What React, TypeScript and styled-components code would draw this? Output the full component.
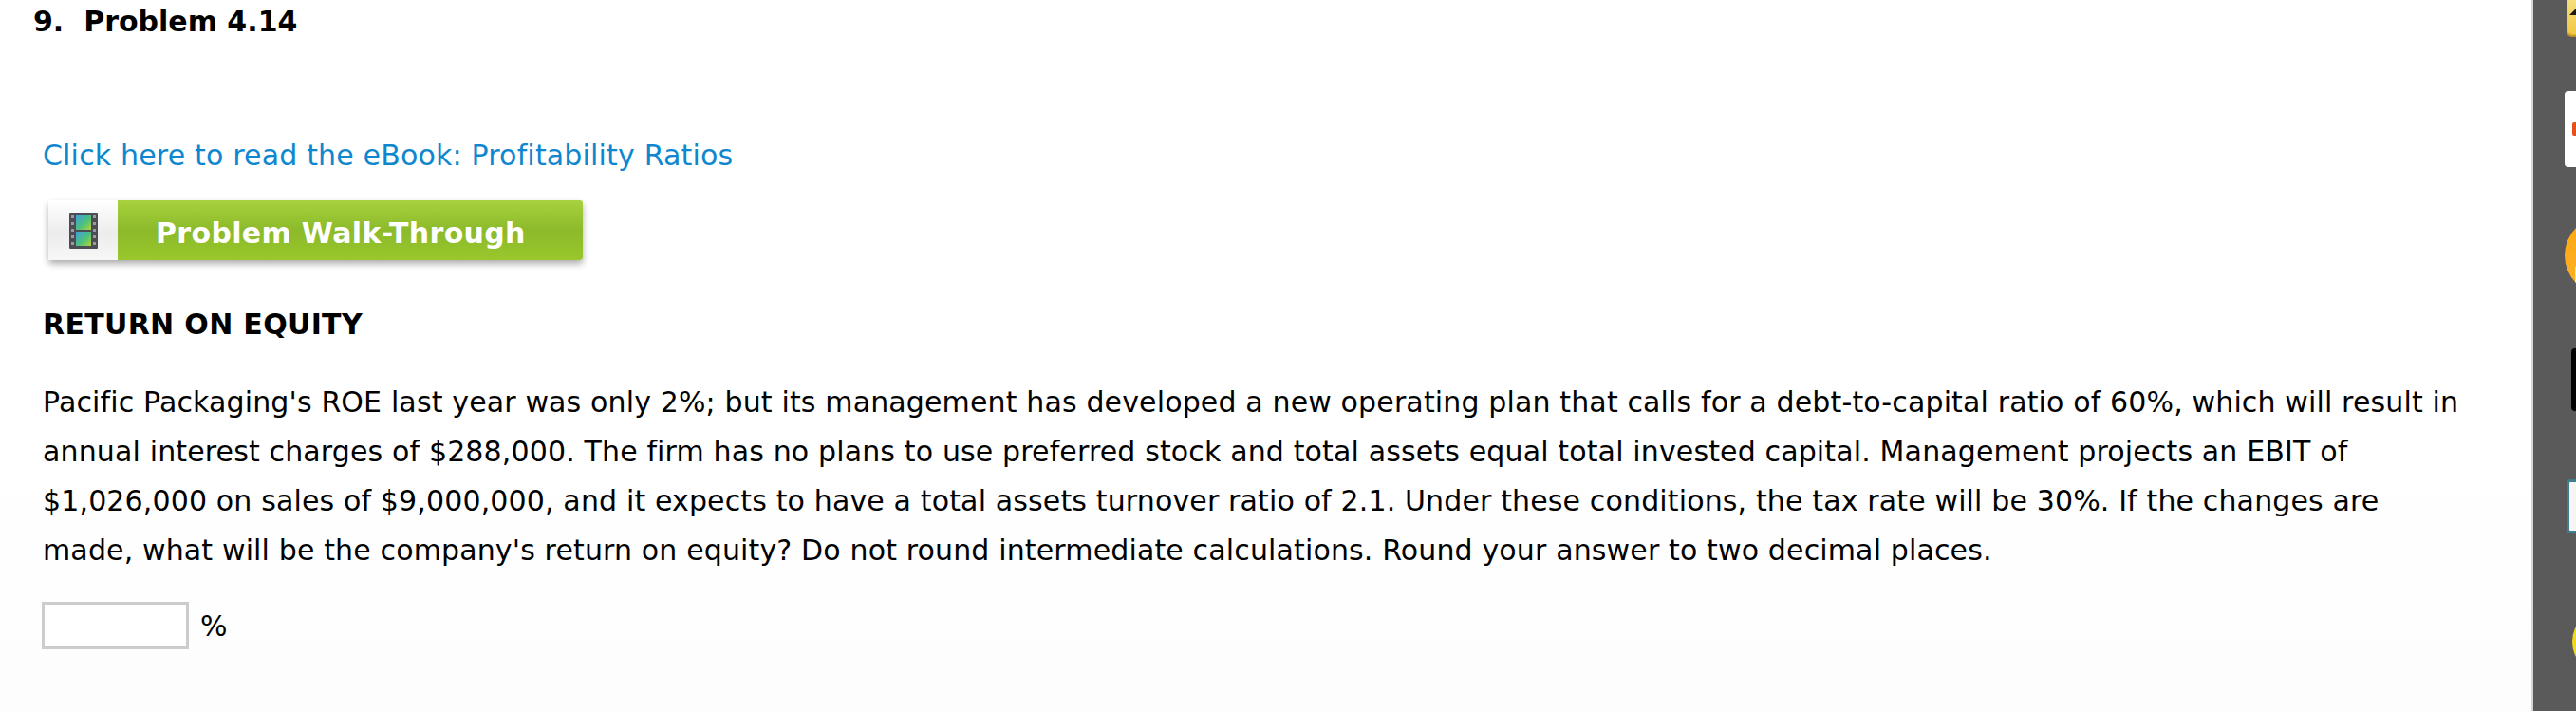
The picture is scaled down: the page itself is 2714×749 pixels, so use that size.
import React from "react";
import styled, { createGlobalStyle } from "styled-components";

const Global = createGlobalStyle`
  html, body { margin: 0; padding: 0; background: #fff; }
  body { font-family: "DejaVu Sans", Verdana, sans-serif; color: #000; }
`;

const Page = styled.div`
  display: flex;
  width: 2714px;
  height: 749px;
  overflow: hidden;
`;

const Main = styled.main`
  flex: 1;
  min-width: 0;
  padding: 4px 0 0 35px;
  background: linear-gradient(#fff 60%, #fdfdfd);
`;

const Title = styled.h1`
  margin: 0 0 103px;
  font-size: 30px;
  line-height: 38px;
  font-weight: 700;
  white-space: pre;
`;

const Content = styled.div`
  padding-left: 10px;
  width: 2550px;
`;

const EbookLink = styled.a`
  display: block;
  font-size: 30px;
  line-height: 38px;
  letter-spacing: 0.17px;
  color: #0f87cf;
  text-decoration: none;
`;

const WalkButton = styled.a`
  display: flex;
  width: 563px;
  height: 63px;
  margin: 28px 0 0 6px;
  border-radius: 3px;
  text-decoration: none;
  box-shadow: 0 4px 7px rgba(0, 0, 0, 0.32);
`;

const IconCell = styled.span`
  flex: 0 0 73px;
  display: flex;
  align-items: center;
  justify-content: center;
  background: linear-gradient(#ffffff, #ececec 55%, #f7f7f7);
`;

const FilmFrame = styled.svg`
  filter: blur(0.6px);
`;

const GreenCell = styled.span`
  flex: 1;
  display: flex;
  align-items: center;
  padding: 5px 0 0 40px;
  font-size: 30px;
  font-weight: 700;
  letter-spacing: 0.33px;
  color: #fff;
  background: linear-gradient(#a8d23e, #8cba2a 50%, #99c72c);
  border-radius: 0 3px 3px 0;
`;

const SectionHead = styled.h2`
  margin: 49px 0 0;
  font-size: 30px;
  line-height: 38px;
  font-weight: 700;
  letter-spacing: 0.32px;
`;

const Body = styled.p`
  margin: 37px 0 0;
  font-size: 30px;
  line-height: 52px;
  letter-spacing: 0.14px;
`;

const AnswerRow = styled.div`
  display: flex;
  align-items: center;
  gap: 12px;
  margin: 28px 0 0 -1px;
  font-size: 30px;
`;

const AnswerBox = styled.input`
  box-sizing: border-box;
  width: 155px;
  height: 50px;
  border: 3px solid #cccccc;
  background: #fff;
  padding: 0;
  outline: none;
`;

const Dock = styled.aside`
  flex: 0 0 47px;
  box-sizing: border-box;
  border-left: 2px solid #d5d5d5;
  background: #5a5a5a;
  overflow: hidden;
`;

const DockItem = styled.div<{ $top: number; $left: number; $h: number; $bg: string; $round?: boolean; $edge?: string }>`
  width: ${(p) => (p.$round ? p.$h : 60)}px;
  height: ${(p) => p.$h}px;
  margin-top: ${(p) => p.$top}px;
  margin-left: ${(p) => p.$left}px;
  background: ${(p) => p.$bg};
  border-radius: ${(p) => (p.$round ? "50%" : "4px")};
  border: ${(p) => (p.$edge ? `3px solid ${p.$edge}` : "none")};
  box-sizing: border-box;
  overflow: hidden;
`;

const TopTile = styled(DockItem)`
  border-radius: 0 0 6px 6px;
  box-shadow: inset 0 -2px 2px rgba(120, 80, 0, 0.5);
`;

const Wedge = styled.div`
  margin: 8px 0 0 3px;
  width: 0;
  height: 0;
  border-left: 8px solid transparent;
  border-bottom: 8px solid #1d1a10;
`;

const RedMark = styled.div`
  margin: 33px 0 0 8px;
  width: 8px;
  height: 14px;
  background: #e8501a;
  border-radius: 2px;
`;

const Sliver = styled.div`
  margin: 52px 0 0 11px;
  width: 4px;
  height: 20px;
  background: #fde6bd;
  border-radius: 2px;
`;

const Film = () => (
  <FilmFrame width="30" height="38" viewBox="0 0 30 38">
    <defs>
      <linearGradient id="fr" x1="0" y1="0" x2="1" y2="1">
        <stop offset="0" stopColor="#3f9fe0" />
        <stop offset="0.55" stopColor="#4cc27a" />
        <stop offset="1" stopColor="#b6d23a" />
      </linearGradient>
    </defs>
    <rect width="30" height="38" rx="1" fill="#4c4c55" />
    <rect x="7" y="3" width="16" height="15" fill="url(#fr)" />
    <rect x="7" y="20" width="16" height="15" fill="url(#fr)" />
    {[3, 10, 17, 24, 31].map((y) => (
      <g key={y}>
        <rect x="2" y={y} width="3" height="3" fill="#9a9aa0" />
        <rect x="25" y={y} width="3" height="3" fill="#9a9aa0" />
      </g>
    ))}
  </FilmFrame>
);

export default function App() {
  return (
    <Page>
      <Global />
      <Main>
        <Title>{"9.  Problem 4.14"}</Title>
        <Content>
          <EbookLink href="#">Click here to read the eBook: Profitability Ratios</EbookLink>
          <WalkButton href="#">
            <IconCell>
              <Film />
            </IconCell>
            <GreenCell>Problem Walk-Through</GreenCell>
          </WalkButton>
          <SectionHead>RETURN ON EQUITY</SectionHead>
          <Body>
            Pacific Packaging's ROE last year was only 2%; but its management has developed a new operating plan that calls for a debt-to-capital ratio of 60%, which will result in annual interest charges of $288,000. The firm has no plans to use preferred stock and total assets equal total invested capital. Management projects an EBIT of $1,026,000 on sales of $9,000,000, and it expects to have a total assets turnover ratio of 2.1. Under these conditions, the tax rate will be 30%. If the changes are made, what will be the company's return on equity? Do not round intermediate calculations. Round your answer to two decimal places.
          </Body>
          <AnswerRow>
            <AnswerBox type="text" />
            <span>%</span>
          </AnswerRow>
        </Content>
      </Main>
      <Dock>
        <TopTile $top={0} $left={35} $h={39} $bg="linear-gradient(#f6df7e, #f1c63f)">
          <Wedge />
        </TopTile>
        <DockItem $top={57} $left={33} $h={80} $bg="#fff">
          <RedMark />
        </DockItem>
        <DockItem $top={52} $left={33} $h={82} $bg="linear-gradient(#fda80f, #fbb02a)" $round>
          <Sliver />
        </DockItem>
        <DockItem $top={57} $left={40} $h={66} $bg="#000" />
        <DockItem $top={72} $left={35} $h={57} $bg="#f7f5f3" $edge="#3f7f8d" />
        <DockItem $top={80} $left={41} $h={68} $bg="#f0d81f" $round />
      </Dock>
    </Page>
  );
}
